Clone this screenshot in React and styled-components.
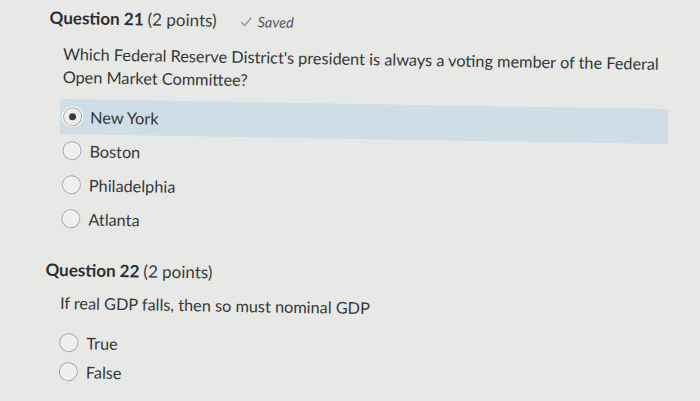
import React from "react";
import styled, { createGlobalStyle } from "styled-components";

const Global = createGlobalStyle`
  html, body { margin: 0; padding: 0; }
  body {
    background: #e8e8e6;
    font-family: Lato, "Open Sans", "Liberation Sans", sans-serif;
    color: #2f3336;
    width: 700px;
    height: 401px;
    overflow: hidden;
  }
`;

/* the reference is a slightly tilted photo of the screen */
const Page = styled.div`
  display: flex;
  flex-direction: column;
  width: 700px;
  height: 401px;
  box-sizing: border-box;
  padding-top: 6px;
  transform: rotate(0.95deg);
  transform-origin: 0 0;
`;

const Question = styled.section`
  box-sizing: border-box;
  display: flex;
  flex-direction: column;
  padding-left: 50px;
  margin-top: ${(p) => p.$top || 0}px;
  width: 670px;
`;

const Header = styled.div`
  display: flex;
  align-items: baseline;
  font-size: 17px;
  line-height: 22px;
  color: #2c2f31;
`;

const Title = styled.span`
  font-weight: 700;
  margin-right: 4px;
`;

const Points = styled.span`
  font-weight: 400;
  color: #3a3d40;
`;

const Saved = styled.span`
  display: inline-flex;
  align-items: center;
  margin-left: 23px;
  font-size: 14.5px;
  font-style: italic;
  color: #55595c;
  gap: 5px;
`;

const Prompt = styled.p`
  margin: ${(p) => p.$gap}px 0 0 ${(p) => p.$indent}px;
  font-size: 16.3px;
  line-height: 23px;
  color: #34383b;
`;

const Options = styled.div`
  display: flex;
  flex-direction: column;
  margin-top: ${(p) => p.$gap}px;
  margin-left: 12px;
`;

const Row = styled.label`
  display: flex;
  align-items: center;
  height: ${(p) => p.$h}px;
  padding-left: 3px;
  background: ${(p) => (p.$selected ? "#cfdde6" : "transparent")};
  font-size: 16.3px;
  color: #34383b;
`;

const Radio = styled.span`
  box-sizing: border-box;
  width: 19px;
  height: 19px;
  border-radius: 50%;
  border: 1px solid #a7aaac;
  background: #efefed;
  display: flex;
  align-items: center;
  justify-content: center;
  margin-right: 8px;
  flex-shrink: 0;
  box-shadow: ${(p) => (p.$checked ? "0 0 0 1px #ffffff" : "inset 0 0 0 1px #f6f6f4")};
  &::after {
    content: "";
    display: ${(p) => (p.$checked ? "block" : "none")};
    width: 7px;
    height: 7px;
    border-radius: 50%;
    background: #3b3e40;
  }
`;

function Check() {
  return (
    <svg width="13" height="11" viewBox="0 0 13 11">
      <path d="M1.5 6 L5 9.5 L11.5 1.5" fill="none" stroke="#9a9c9e" strokeWidth="1.6" />
    </svg>
  );
}

const q21 = ["New York", "Boston", "Philadelphia", "Atlanta"];
const q22 = ["True", "False"];

export default function App() {
  return (
    <>
      <Global />
      <Page>
        <Question>
          <Header>
            <Title>Question 21</Title>
            <Points>(2 points)</Points>
            <Saved>
              <Check />
              Saved
            </Saved>
          </Header>
          <Prompt $indent={14} $gap={12}>
            Which Federal Reserve District's president is always a voting member of the Federal Open Market Committee?
          </Prompt>
          <Options $gap={11}>
            {q21.map((o, i) => (
              <Row key={o} $selected={i === 0} $h={i === 0 ? 35 : 34}>
                <Radio $checked={i === 0} />
                {o}
              </Row>
            ))}
          </Options>
        </Question>
        <Question $top={23}>
          <Header>
            <Title>Question 22</Title>
            <Points>(2 points)</Points>
          </Header>
          <Prompt $indent={15} $gap={10}>If real GDP falls, then so must nominal GDP</Prompt>
          <Options $gap={14}>
            {q22.map((o) => (
              <Row key={o} $h={29}>
                <Radio />
                {o}
              </Row>
            ))}
          </Options>
        </Question>
      </Page>
    </>
  );
}
